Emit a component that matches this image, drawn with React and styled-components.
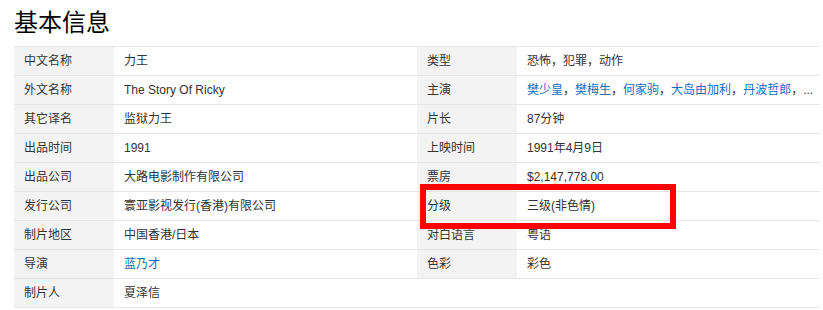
import React from 'react';
import styled, { createGlobalStyle } from 'styled-components';

const leftRows = [
  { label: '中文名称', value: '力王' },
  { label: '外文名称', value: 'The Story Of Ricky' },
  { label: '其它译名', value: '监狱力王' },
  { label: '出品时间', value: '1991' },
  { label: '出品公司', value: '大路电影制作有限公司' },
  { label: '发行公司', value: '寰亚影视发行(香港)有限公司' },
  { label: '制片地区', value: '中国香港/日本' },
  { label: '导演', links: ['蓝乃才'] },
  { label: '制片人', value: '夏泽信' },
];

const rightRows = [
  { label: '类型', value: '恐怖，犯罪，动作' },
  { label: '主演', links: ['樊少皇', '樊梅生', '何家驹', '大岛由加利', '丹波哲郎'], more: true },
  { label: '片长', value: '87分钟' },
  { label: '上映时间', value: '1991年4月9日' },
  { label: '票房', value: '$2,147,778.00' },
  { label: '分级', value: '三级(非色情)' },
  { label: '对白语言', value: '粤语' },
  { label: '色彩', value: '彩色' },
  { empty: true },
];

const App = () => {
  const renderValue = (row) => {
    if (row.links) {
      return (
        <>
          {row.links.map((name, i) => (
            <React.Fragment key={name}>
              {i > 0 && '，'}
              <Link href="#">{name}</Link>
            </React.Fragment>
          ))}
          {row.more && <>，<More>...</More></>}
        </>
      );
    }
    return row.value;
  };

  const renderColumn = (rows) => (
    <Column>
      {rows.map((row, i) => (
        <Row key={i}>
          <Label $empty={row.empty}>{row.label}</Label>
          <Value>{row.empty ? null : renderValue(row)}</Value>
        </Row>
      ))}
    </Column>
  );

  return (
    <Page>
      <GlobalStyle />
      <Title>基本信息</Title>
      <InfoTable>
        {renderColumn(leftRows)}
        {renderColumn(rightRows)}
        <Highlight />
      </InfoTable>
    </Page>
  );
};

const GlobalStyle = createGlobalStyle`
  body {
    margin: 0;
    background: #fff;
    font-family: "Liberation Sans", "Noto Sans CJK SC", sans-serif;
  }
`;

const Page = styled.div`
  padding: 9px 3px 0 14px;
`;

const Title = styled.h2`
  margin: 0 0 13px;
  font-family: "Noto Sans CJK SC", sans-serif;
  font-size: 24px;
  line-height: 24px;
  font-weight: 400;
  color: #000;
`;

const InfoTable = styled.div`
  position: relative;
  display: grid;
  grid-template-columns: 1fr 1fr;
  border-top: 1px solid #e6e6e6;
`;

const Column = styled.div`
  display: flex;
  flex-direction: column;
`;

const Row = styled.div`
  display: flex;
  height: 29px;
  border-bottom: 1px solid #e6e6e6;
  box-sizing: border-box;
  font-size: 12px;
  line-height: 28px;
  color: #333;
`;

const Label = styled.div`
  width: 100px;
  flex-shrink: 0;
  padding-left: 10px;
  box-sizing: border-box;
  background: ${(p) => (p.$empty ? '#fff' : '#f3f3f3')};
  white-space: nowrap;
`;

const Value = styled.div`
  flex: 1;
  padding-left: 10px;
  white-space: nowrap;
  overflow: hidden;
`;

const Link = styled.a`
  color: #136ec2;
  text-decoration: none;
`;

const More = styled.span`
  color: #333;
`;

const Highlight = styled.div`
  position: absolute;
  left: 406px;
  top: 137px;
  width: 256px;
  height: 45px;
  box-sizing: border-box;
  border: 6px solid #ff0000;
`;

export default App;
